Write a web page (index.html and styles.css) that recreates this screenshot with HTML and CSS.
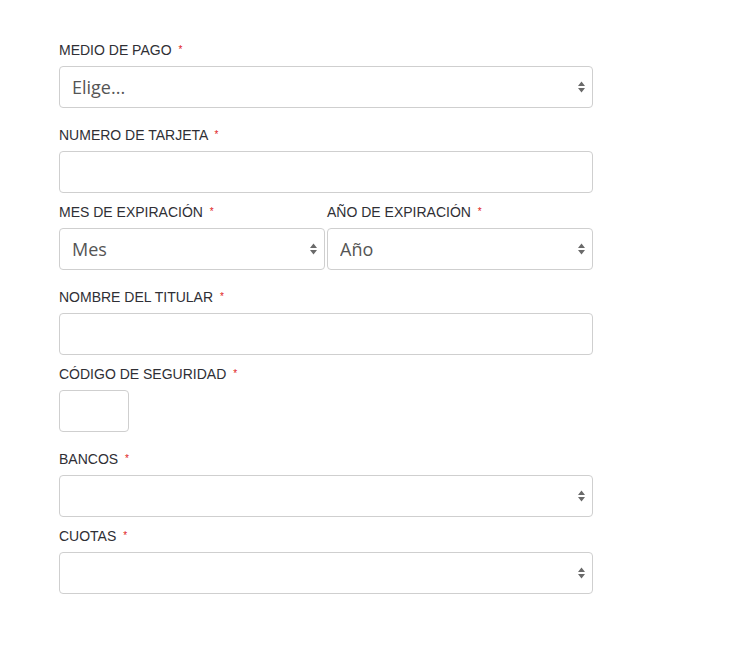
FILE: index.html
```html
<!DOCTYPE html>
<html lang="es">
<head>
<meta charset="utf-8">
<link rel="stylesheet" href="styles.css">
</head>
<body>
<form class="form">
  <div class="field gap-lg">
    <label class="lbl">MEDIO DE PAGO <span class="req">*</span></label>
    <div class="select-wrap">
      <select class="ctrl"><option>Elige...</option></select>
      <svg class="arrows" width="7" height="12" viewBox="0 0 7 12"><path d="M3.5 0.5 L7 5 L0 5 Z M0 7 L7 7 L3.5 11.5 Z" fill="#6a6a6a"/></svg>
    </div>
  </div>
  <div class="field gap-sm">
    <label class="lbl">NUMERO DE TARJETA <span class="req">*</span></label>
    <input class="ctrl" type="text">
  </div>
  <div class="field gap-lg">
    <div class="row">
      <div class="col">
        <label class="lbl">MES DE EXPIRACIÓN <span class="req">*</span></label>
        <div class="select-wrap">
          <select class="ctrl"><option>Mes</option></select>
          <svg class="arrows" width="7" height="12" viewBox="0 0 7 12"><path d="M3.5 0.5 L7 5 L0 5 Z M0 7 L7 7 L3.5 11.5 Z" fill="#6a6a6a"/></svg>
        </div>
      </div>
      <div class="col">
        <label class="lbl">AÑO DE EXPIRACIÓN <span class="req">*</span></label>
        <div class="select-wrap">
          <select class="ctrl"><option>Año</option></select>
          <svg class="arrows" width="7" height="12" viewBox="0 0 7 12"><path d="M3.5 0.5 L7 5 L0 5 Z M0 7 L7 7 L3.5 11.5 Z" fill="#6a6a6a"/></svg>
        </div>
      </div>
    </div>
  </div>
  <div class="field gap-sm">
    <label class="lbl">NOMBRE DEL TITULAR <span class="req">*</span></label>
    <input class="ctrl" type="text">
  </div>
  <div class="field gap-lg">
    <label class="lbl">CÓDIGO DE SEGURIDAD <span class="req">*</span></label>
    <input class="ctrl ctrl-short" type="text">
  </div>
  <div class="field gap-sm">
    <label class="lbl">BANCOS <span class="req">*</span></label>
    <div class="select-wrap">
      <select class="ctrl"><option></option></select>
      <svg class="arrows" width="7" height="12" viewBox="0 0 7 12"><path d="M3.5 0.5 L7 5 L0 5 Z M0 7 L7 7 L3.5 11.5 Z" fill="#6a6a6a"/></svg>
    </div>
  </div>
  <div class="field">
    <label class="lbl">CUOTAS <span class="req">*</span></label>
    <div class="select-wrap">
      <select class="ctrl"><option></option></select>
      <svg class="arrows" width="7" height="12" viewBox="0 0 7 12"><path d="M3.5 0.5 L7 5 L0 5 Z M0 7 L7 7 L3.5 11.5 Z" fill="#6a6a6a"/></svg>
    </div>
  </div>
</form>
</body>
</html>
```
FILE: styles.css
```css
html, body {
  margin: 0;
  padding: 0;
  background: #fff;
}
.form {
  width: 534px;
  padding: 41px 0 0 59px;
  display: flex;
  flex-direction: column;
}
.field {
  display: flex;
  flex-direction: column;
}
.gap-lg { margin-bottom: 18px; }
.gap-sm { margin-bottom: 10px; }
.lbl {
  display: block;
  height: 19px;
  font-family: "Liberation Sans", Arial, sans-serif;
  font-size: 14px;
  line-height: 19px;
  color: #2f2f35;
  margin-bottom: 6px;
  white-space: nowrap;
}
.req {
  color: #e02020;
  font-size: 10px;
  line-height: 0;
  vertical-align: 2px;
  margin-left: 3px;
}
.row {
  display: grid;
  grid-template-columns: 1fr 1fr;
  column-gap: 2px;
}
.col {
  display: flex;
  flex-direction: column;
}
.select-wrap {
  position: relative;
}
.ctrl {
  box-sizing: border-box;
  display: block;
  width: 100%;
  height: 42px;
  margin: 0;
  padding: 0 12px;
  border: 1px solid #cfcfcf;
  border-radius: 4px;
  background: #fff;
  font-family: "Open Sans", sans-serif;
  font-size: 18px;
  color: #555;
  -webkit-appearance: none;
  appearance: none;
  outline: none;
}
.ctrl-short {
  width: 70px;
}
.arrows {
  position: absolute;
  right: 8px;
  top: 15px;
  pointer-events: none;
}
```
